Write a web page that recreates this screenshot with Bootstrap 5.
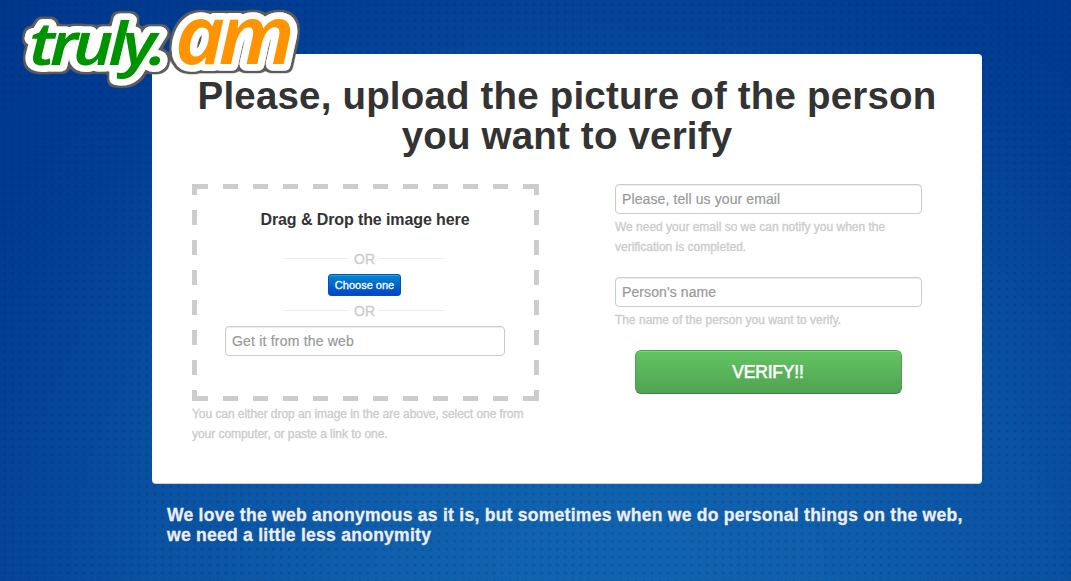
<!DOCTYPE html>
<html lang="en">
<head>
  <meta charset="UTF-8">
  <title>truly.am</title>
  <meta name="viewport" content="width=device-width, initial-scale=1">
  <link href="https://cdn.jsdelivr.net/npm/bootstrap@5.3.2/dist/css/bootstrap.min.css" rel="stylesheet">
  <style>
    body {
      font-family: "Liberation Sans", Arial, sans-serif;
      font-size: 14px;
      line-height: 20px;
      color: #333;
      min-height: 581px;
      overflow: hidden;
      background:
        radial-gradient(circle, rgba(0, 30, 80, .22) 0, rgba(0, 30, 80, .15) 1px, transparent 2px) 1px 1px / 7.9px 7.9px,
        radial-gradient(circle at 600px 620px, #1166b0 0, #0f5eab 250px, #0a52a2 450px, #003d94 680px, #00378b 100%);
    }
    .logo {
      position: absolute;
      top: 0;
      left: 0;
      z-index: 10;
      overflow: visible;
    }
    .logo text {
      paint-order: stroke;
      stroke: #fff;
      stroke-width: 14px;
      vector-effect: non-scaling-stroke;
    }
    .page-wrap {
      width: 830px;
      margin-left: 152px;
      padding-top: 54px;
    }
    .panel {
      height: 430px;
      border-radius: 4px;
      padding: 22px 40px 0;
      box-shadow: inset 0 -1px 1px rgba(0, 0, 0, .2);
    }
    h1 {
      font-size: 38.5px;
      line-height: 40px;
      letter-spacing: .18px;
      margin: 0 -20px 28px;
    }
    .left-col {
      width: 347px;
    }
    .right-col {
      width: 307px;
      margin-right: 20px;
    }
    /* 15px dashes on a 30px period, 5px thick */
    .drop-zone {
      height: 217px;
      padding: 26px 34px 0 33px;
      background:
        linear-gradient(90deg, #ccc 50%, transparent 50%) 1px 0 / 30px 5px repeat-x,
        linear-gradient(90deg, #ccc 50%, transparent 50%) 1px 100% / 30px 5px repeat-x,
        linear-gradient(#ccc 50%, transparent 50%) 0 -4px / 5px 30px repeat-y,
        linear-gradient(#ccc 50%, transparent 50%) 100% -4px / 5px 30px repeat-y;
    }
    .drop-title {
      font-size: 16px;
      line-height: 20px;
      letter-spacing: -.1px;
      margin-bottom: 19px;
    }
    .divider {
      width: 161px;
      height: 20px;
      color: #ccc;
      margin-right: 3px;
      -webkit-text-stroke: .3px #ccc;
    }
    .divider::before,
    .divider::after {
      content: "";
      flex: 1;
      height: 1px;
      margin: 0 5px 1px 0;
      background: #eee;
    }
    .divider::after {
      margin: 0 0 1px 3px;
    }
    .form-control {
      height: 30px;
      padding: 4px 6px;
      font-size: 14px;
      line-height: 20px;
      letter-spacing: .1px;
      border-color: #ccc;
      border-radius: 4px;
      box-shadow: inset 0 1px 1px rgba(0, 0, 0, .075);
    }
    .form-control::placeholder {
      color: #999;
      -webkit-text-stroke: .2px #999;
    }
    .web-input {
      margin-top: 5px;
      letter-spacing: .2px;
    }
    .help-text {
      color: #ccc;
      font-size: 12px;
      line-height: 20px;
      padding-top: 3px;
      margin-bottom: 20px;
      letter-spacing: -.01px;
      -webkit-text-stroke: .35px #ccc;
    }
    .left-col .help-text {
      letter-spacing: -.05px;
    }
    .btn-choose {
      width: 73px;
      height: 22px;
      padding: 0;
      margin: 5px 1px 5px 0;
      font-size: 11px;
      line-height: 20px;
      color: #fff;
      border: 1px solid #0350b8;
      border-radius: 3px;
      background: linear-gradient(#08c, #04c);
      box-shadow: inset 0 1px 0 rgba(255, 255, 255, .2);
      -webkit-text-stroke: .3px #fff;
    }
    .btn-verify {
      width: 267px;
      height: 44px;
      padding: 0 1px 0 0;
      font-size: 17.5px;
      letter-spacing: -.2px;
      color: #fff;
      border: 1px solid #4c9e4c;
      border-bottom-color: #438543;
      border-radius: 6px;
      background: linear-gradient(#62c462, #51a351);
      box-shadow: inset 0 1px 0 rgba(255, 255, 255, .2);
      text-shadow: 0 -1px 0 rgba(0, 0, 0, .25);
      -webkit-text-stroke: .6px #fff;
    }
    .tagline {
      font-size: 17.5px;
      line-height: 20px;
      letter-spacing: .27px;
      color: #eee;
      margin: 21px 15px 0;
      -webkit-text-stroke: .3px #eee;
    }
  </style>
</head>
<body>
  <svg class="logo" width="310" height="120" font-family="Noto Sans" font-style="italic" font-weight="600" stroke-linejoin="round">
    <defs>
      <filter id="outline" x="-20%" y="-20%" width="140%" height="140%">
        <feMorphology in="SourceAlpha" operator="dilate" radius="2"/>
        <feGaussianBlur stdDeviation="1"/>
        <feComponentTransfer result="grown">
          <feFuncA type="linear" slope="2.6" intercept="-.5"/>
        </feComponentTransfer>
        <feFlood flood-color="#5c5c5c"/>
        <feComposite in2="grown" operator="in"/>
        <feMerge>
          <feMergeNode/>
          <feMergeNode in="SourceGraphic"/>
        </feMerge>
      </filter>
    </defs>
    <g filter="url(#outline)">
      <text transform="translate(29 65) scale(1.14 1)" font-size="60" letter-spacing="-4.6" fill="#009300">truly.</text>
      <text transform="translate(175 64) scale(1.04 1)" font-size="82" letter-spacing="-6" fill="#ff9400">am</text>
    </g>
  </svg>

  <div class="page-wrap">
    <div class="panel bg-white">
      <h1 class="fw-bold text-center">Please, upload the picture of the person<br>you want to verify</h1>
      <form class="d-flex justify-content-between align-items-start">
        <div class="left-col">
          <div class="drop-zone d-flex flex-column align-items-center">
            <div class="drop-title fw-bold">Drag &amp; Drop the image here</div>
            <div class="divider d-flex align-items-center">OR</div>
            <button type="button" class="btn btn-choose">Choose one</button>
            <div class="divider d-flex align-items-center">OR</div>
            <input type="text" class="form-control web-input" placeholder="Get it from the web">
          </div>
          <div class="help-text">You can either drop an image in the are above, select one from<br>your computer, or paste a link to one.</div>
        </div>
        <div class="right-col">
          <input type="text" class="form-control" placeholder="Please, tell us your email">
          <div class="help-text">We need your email so we can notify you when the<br>verification is completed.</div>
          <input type="text" class="form-control" placeholder="Person's name">
          <div class="help-text">The name of the person you want to verify.</div>
          <button type="button" class="btn btn-verify d-block mx-auto">VERIFY!!</button>
        </div>
      </form>
    </div>
    <p class="tagline fw-bold">We love the web anonymous as it is, but sometimes when we do personal things on the web,<br>we need a little less anonymity</p>
  </div>
  <script src="https://cdn.jsdelivr.net/npm/bootstrap@5.3.2/dist/js/bootstrap.bundle.min.js"></script>
</body>
</html>
